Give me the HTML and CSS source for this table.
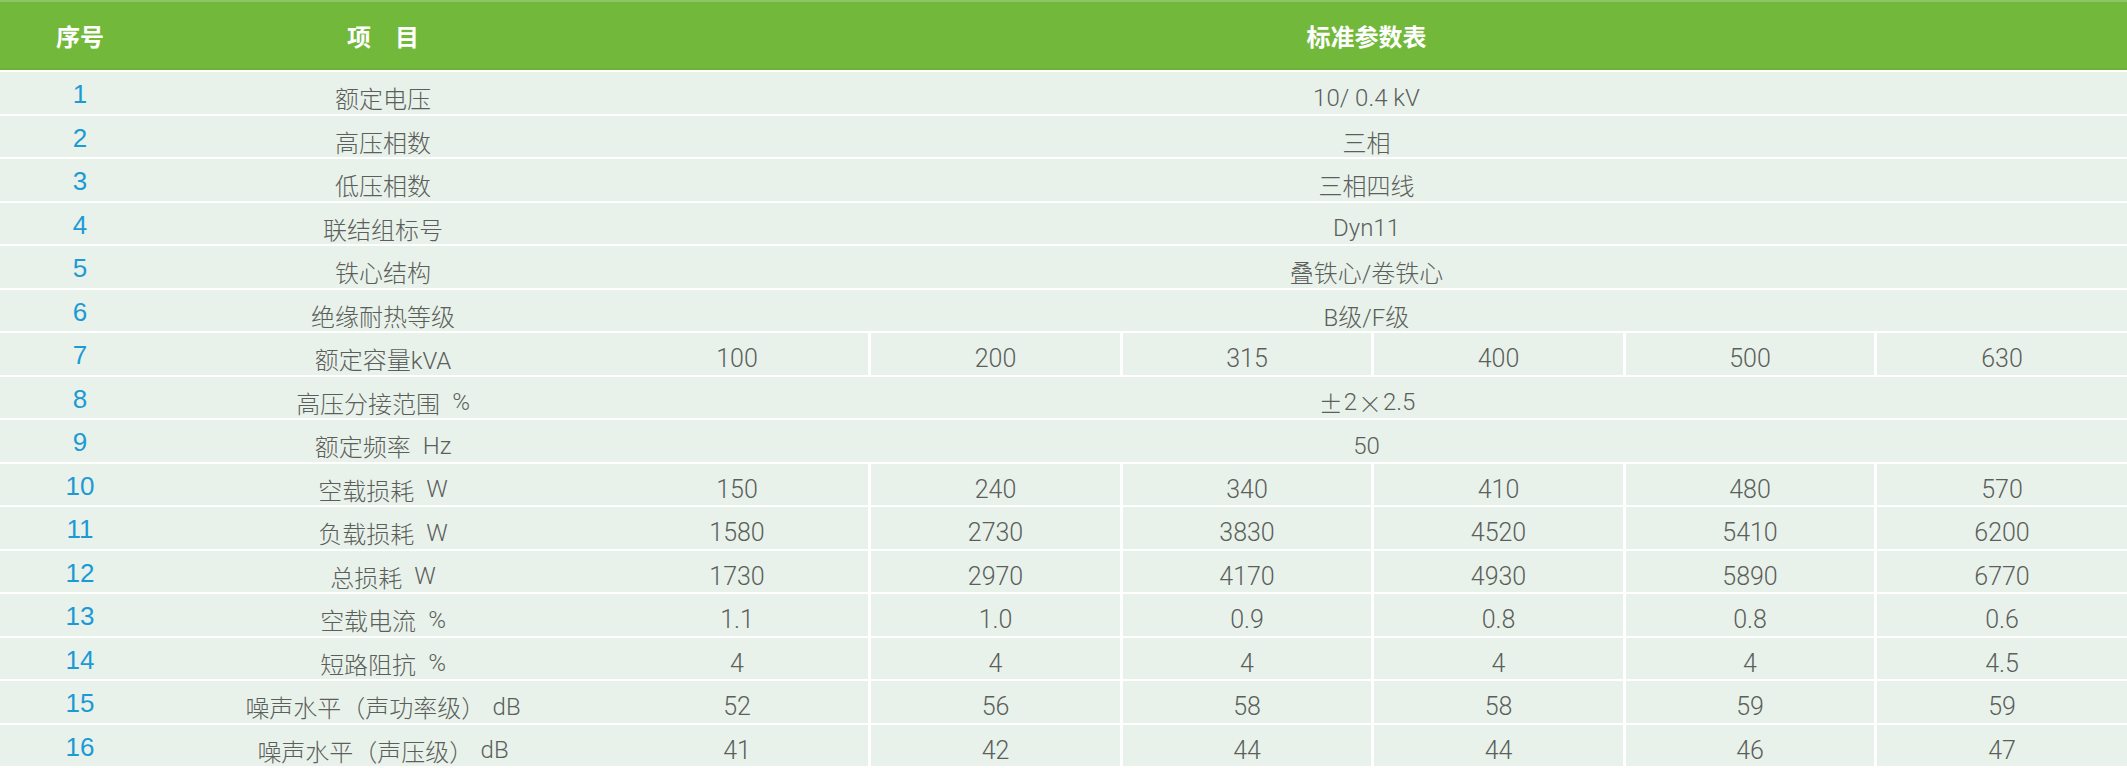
FILE: index.html
```html
<!DOCTYPE html>
<html lang="zh-CN">
<head>
<meta charset="utf-8">
<title>标准参数表</title>
<link rel="stylesheet" href="styles.css">
</head>
<body>
<div class="sheet">
  <div class="row head">
    <div class="cell seq">序号</div>
    <div class="cell item">项　目</div>
    <div class="cell span">标准参数表</div>
  </div>

  <div class="row"><div class="cell seq">1</div><div class="cell item">额定电压</div><div class="cell span">10/ 0.4 kV</div></div>
  <div class="row"><div class="cell seq">2</div><div class="cell item">高压相数</div><div class="cell span">三相</div></div>
  <div class="row"><div class="cell seq">3</div><div class="cell item">低压相数</div><div class="cell span">三相四线</div></div>
  <div class="row"><div class="cell seq">4</div><div class="cell item">联结组标号</div><div class="cell span">Dyn11</div></div>
  <div class="row"><div class="cell seq">5</div><div class="cell item">铁心结构</div><div class="cell span">叠铁心/卷铁心</div></div>
  <div class="row"><div class="cell seq">6</div><div class="cell item">绝缘耐热等级</div><div class="cell span">B级/F级</div></div>
  <div class="row"><div class="cell seq">7</div><div class="cell item">额定容量kVA</div><div class="cell val">100</div><div class="cell val sep">200</div><div class="cell val sep">315</div><div class="cell val sep">400</div><div class="cell val sep">500</div><div class="cell val sep">630</div></div>
  <div class="row"><div class="cell seq">8</div><div class="cell item">高压分接范围<span class="unit">%</span></div><div class="cell span"><span class="sym">±</span>2<span class="sym">×</span>2.5</div></div>
  <div class="row"><div class="cell seq">9</div><div class="cell item">额定频率<span class="unit">Hz</span></div><div class="cell span">50</div></div>
  <div class="row"><div class="cell seq">10</div><div class="cell item">空载损耗<span class="unit">W</span></div><div class="cell val">150</div><div class="cell val sep">240</div><div class="cell val sep">340</div><div class="cell val sep">410</div><div class="cell val sep">480</div><div class="cell val sep">570</div></div>
  <div class="row"><div class="cell seq">11</div><div class="cell item">负载损耗<span class="unit">W</span></div><div class="cell val">1580</div><div class="cell val sep">2730</div><div class="cell val sep">3830</div><div class="cell val sep">4520</div><div class="cell val sep">5410</div><div class="cell val sep">6200</div></div>
  <div class="row"><div class="cell seq">12</div><div class="cell item">总损耗<span class="unit">W</span></div><div class="cell val">1730</div><div class="cell val sep">2970</div><div class="cell val sep">4170</div><div class="cell val sep">4930</div><div class="cell val sep">5890</div><div class="cell val sep">6770</div></div>
  <div class="row"><div class="cell seq">13</div><div class="cell item">空载电流<span class="unit">%</span></div><div class="cell val">1.1</div><div class="cell val sep">1.0</div><div class="cell val sep">0.9</div><div class="cell val sep">0.8</div><div class="cell val sep">0.8</div><div class="cell val sep">0.6</div></div>
  <div class="row"><div class="cell seq">14</div><div class="cell item">短路阻抗<span class="unit">%</span></div><div class="cell val">4</div><div class="cell val sep">4</div><div class="cell val sep">4</div><div class="cell val sep">4</div><div class="cell val sep">4</div><div class="cell val sep">4.5</div></div>
  <div class="row"><div class="cell seq">15</div><div class="cell item">噪声水平（声功率级）<span class="unit db">dB</span></div><div class="cell val">52</div><div class="cell val sep">56</div><div class="cell val sep">58</div><div class="cell val sep">58</div><div class="cell val sep">59</div><div class="cell val sep">59</div></div>
  <div class="row"><div class="cell seq">16</div><div class="cell item">噪声水平（声压级）<span class="unit db">dB</span></div><div class="cell val">41</div><div class="cell val sep">42</div><div class="cell val sep">44</div><div class="cell val sep">44</div><div class="cell val sep">46</div><div class="cell val sep">47</div></div>
</div>
</body>
</html>
```

FILE: styles.css
```css
html, body {
  margin: 0;
  padding: 0;
  background: #ffffff;
}

.sheet {
  width: 2127px;
  font-family: Roboto, "Noto Sans CJK SC", sans-serif;
  font-weight: 300;
  color: #5b5f5c;
  font-size: 24px;
}

.row {
  display: grid;
  grid-template-columns: 160px 446px 262px 252px 251px 252px 251px 253px;
  height: 41.5px;
  margin-top: 2px;
  background: #e9f2ea;
}

.row.head {
  height: 70px;
  margin-top: 0;
  background: #72b93b;
  box-shadow: inset 0 2px 0 #8dc763, inset 0 -2px 0 #6db236;
  color: #ffffff;
  font-family: "Noto Sans CJK SC", sans-serif;
  font-weight: 700;
  font-size: 24px;
}

.cell {
  display: flex;
  align-items: center;
  justify-content: center;
  white-space: nowrap;
  box-sizing: border-box;
}

.row:not(.head) .cell.item,
.row:not(.head) .cell.span,
.row:not(.head) .cell.val {
  padding-top: 8px;
}

.cell.span {
  grid-column: 3 / -1;
}

.row:not(.head) .cell.seq {
  font-family: "Liberation Sans", Arial, sans-serif;
  font-weight: 400;
  font-size: 26px;
  color: #1c9ad6;
  padding-top: 2px;
}

.cell.val {
  font-size: 25px;
}

.unit {
  margin-left: 0.5em;
}

.unit.db {
  margin-left: 0.3em;
}

.sym {
  font-family: "Noto Sans CJK SC", sans-serif;
  font-weight: 300;
  margin: 0 1px;
}

.cell.sep {
  border-left: 3px solid #ffffff;
}
```
